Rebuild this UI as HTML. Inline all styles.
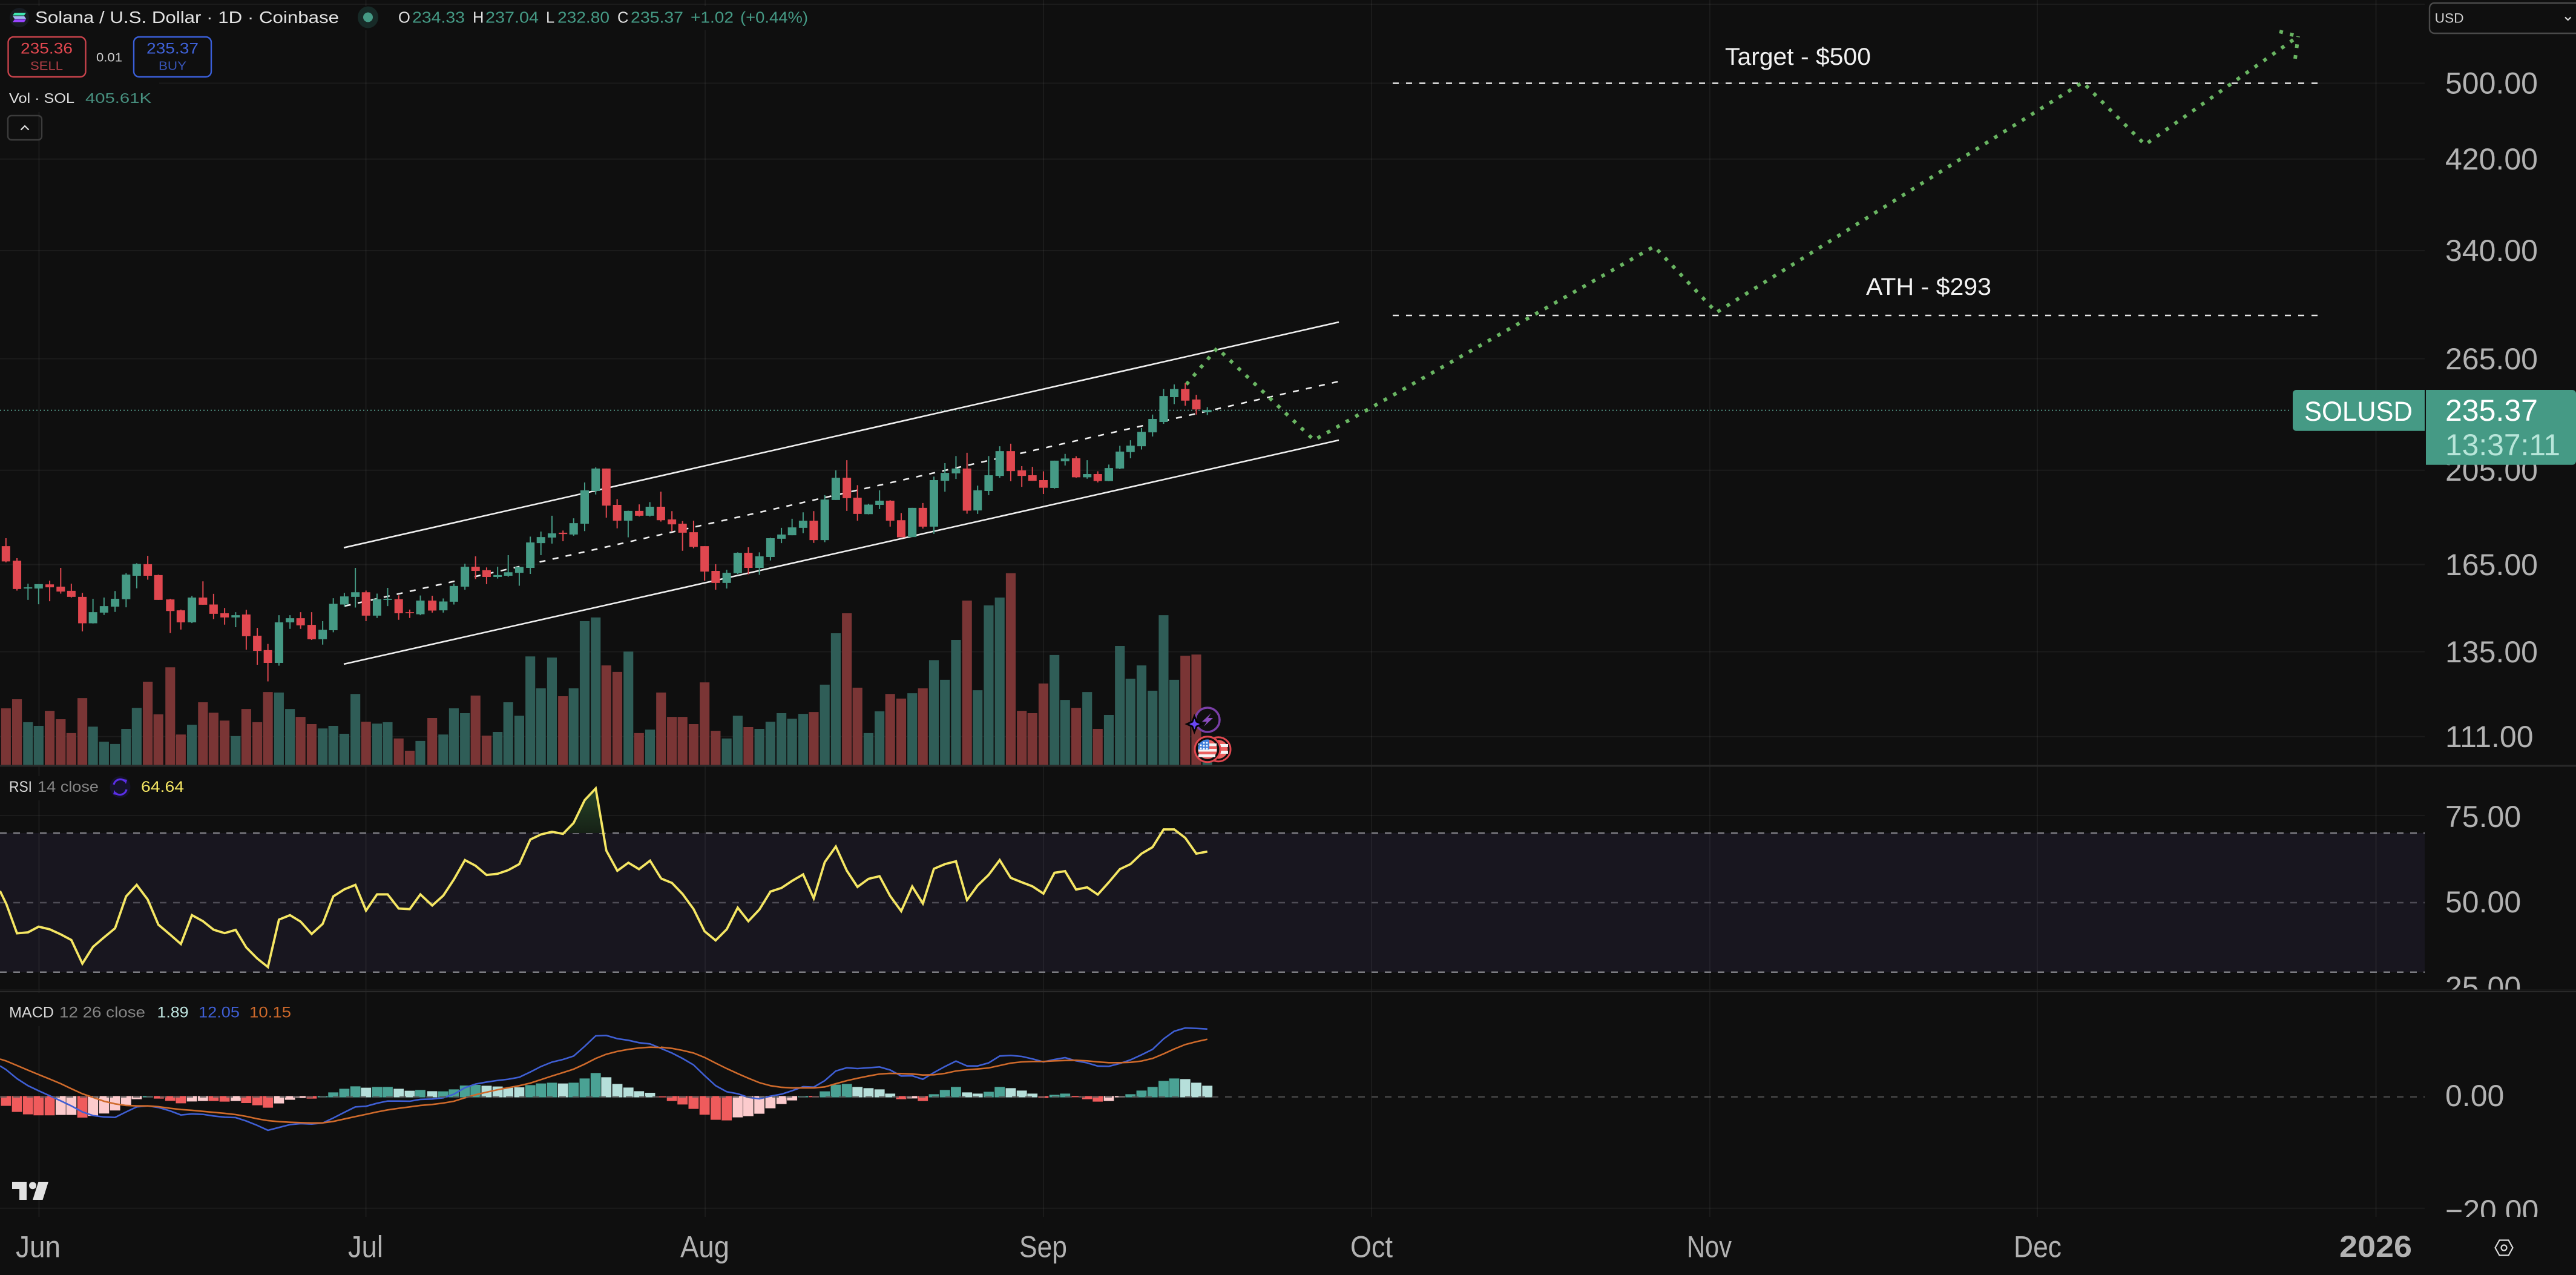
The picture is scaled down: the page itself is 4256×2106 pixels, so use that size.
<!DOCTYPE html>
<html lang="en"><head><meta charset="utf-8"><title>SOLUSD</title>
<style>
html,body{margin:0;padding:0;background:#0f0f0f;width:4256px;height:2106px;overflow:hidden}
svg{display:block}
text{font-family:"Liberation Sans",sans-serif}
.z path,.z polyline{vector-effect:non-scaling-stroke}
.ax{font-size:50px;fill:#b2b2b2}
.t{font-size:50px;fill:#b2b2b2}
</style></head><body>
<svg width="4256" height="2106" viewBox="0 0 4256 2106" xmlns="http://www.w3.org/2000/svg">
<rect width="4256" height="2106" fill="#0f0f0f"/>

<!-- RSI band -->
<rect x="0" y="1376" width="4006" height="230" fill="#18161f"/>

<!-- grid -->
<g stroke="#fff" stroke-opacity=".05" stroke-width="2" fill="none">
<path d="M64.5 0V2010M604.5 0V2010M1165 0V2010M1724 0V2010M2266 0V2010M2825 0V2010M3366 0V2010M3925.5 0V2010"/>
<path d="M0 7H4006M0 137.5H4006M0 262.7H4006M0 414H4006M0 592.5H4006M0 776.8H4006M0 932.5H4006M0 1076.5H4006M0 1216.6H4006M0 1347H4006M0 1995.7H4006"/>
</g>
<!-- legend cutouts -->
<g fill="#0f0f0f">
<rect x="0" y="10" width="1350" height="40"/><rect x="0" y="50" width="263" height="135"/>
<rect x="0" y="1282" width="315" height="40"/><rect x="0" y="1640" width="490" height="55"/>
</g>

<!-- RSI dashed levels -->
<g fill="none" stroke-dasharray="11 11" stroke-width="2.5">
<path d="M0 1376H4006" stroke="#7c7c82"/>
<path d="M0 1491H4006" stroke="#4e4c56"/>
<path d="M0 1605.7H4006" stroke="#7c7c82"/>
</g>

<!-- last price dotted -->
<path d="M0 677.7H3784" fill="none" stroke="#4f8f80" stroke-width="2" stroke-dasharray="2 4"/>

<!-- channel lines -->
<g fill="none" stroke="#efefef" stroke-width="2.6">
<path d="M568 904.7L2212 532"/>
<path d="M568 1097L2212 727"/>
<path d="M569.6 1001L2212 630" stroke-dasharray="10 12"/>
</g>

<!-- target lines -->
<g fill="none" stroke="#e8e8e8" stroke-width="2.4" stroke-dasharray="10 12">
<path d="M2301 137.5H3832"/><path d="M2301 521H3832"/>
</g>
<text x="2850" y="107" font-size="40" fill="#f2f2f2" textLength="241" lengthAdjust="spacingAndGlyphs">Target - $500</text>
<text x="3083" y="487" font-size="40" fill="#f2f2f2" textLength="207" lengthAdjust="spacingAndGlyphs">ATH - $293</text>

<!-- projection path -->
<g fill="none" stroke="#69b562" stroke-width="6" stroke-dasharray="6 12">
<path d="M1960 635L2011 575L2171 727L2733 407L2836 516L3441 136L3544 239L3797 60"/>
<path d="M3766 52L3797 60"/><path d="M3792 97L3797 60"/>
</g>

<!-- Volume + candles, first half: coords x/1.4255, y/2.613 -->
<g class="z" transform="translate(0,700) scale(.7015,.3827)">
<path fill="#7a3535" d="M2.5 1228h23V1472h-23zM28.5 1189h23V1472h-23zM105.5 1239h23V1472h-23zM131.5 1275h23V1472h-23zM156.5 1335h23V1472h-23zM182.5 1184h23V1472h-23zM336.5 1113h23V1472h-23zM361.5 1254h23V1472h-23zM389.5 1051h23V1472h-23zM414.5 1341h23V1472h-23zM466.5 1202h23V1472h-23zM491.5 1247h23V1472h-23zM517.5 1281h23V1472h-23zM568.5 1231h23V1472h-23zM594.5 1288h23V1472h-23zM619.5 1158h23V1472h-23zM696.5 1265h23V1472h-23zM722.5 1296h23V1472h-23zM850.5 1286h23V1472h-23zM927.5 1358h23V1472h-23zM953.5 1411h23V1472h-23zM1006.5 1270h23V1472h-23zM1108.5 1173h23V1472h-23zM1134.5 1346h23V1472h-23zM1314.5 1176h23V1472h-23zM1416.5 1043h23V1472h-23zM1442.5 1071h23V1472h-23zM1493.5 1335h23V1472h-23zM1545.5 1160h23V1472h-23z"/>
<path fill="#2f5d57" d="M54.5 1288h23V1472h-23zM79.5 1304h23V1472h-23zM207.5 1307h23V1472h-23zM233.5 1372h23V1472h-23zM259.5 1382h23V1472h-23zM285.5 1317h23V1472h-23zM310.5 1226h23V1472h-23zM440.5 1299h23V1472h-23zM543.5 1348h23V1472h-23zM645.5 1160h23V1472h-23zM671.5 1231h23V1472h-23zM748.5 1315h23V1472h-23zM773.5 1304h23V1472h-23zM799.5 1338h23V1472h-23zM825.5 1166h23V1472h-23zM876.5 1294h23V1472h-23zM901.5 1288h23V1472h-23zM978.5 1369h23V1472h-23zM1032.5 1341h23V1472h-23zM1057.5 1228h23V1472h-23zM1083.5 1249h23V1472h-23zM1160.5 1330h23V1472h-23zM1185.5 1202h23V1472h-23zM1211.5 1260h23V1472h-23zM1237.5 1004h23V1472h-23zM1262.5 1142h23V1472h-23zM1288.5 1009h23V1472h-23zM1339.5 1142h23V1472h-23zM1365.5 852h23V1472h-23zM1391.5 836h23V1472h-23zM1468.5 983h23V1472h-23zM1519.5 1320h23V1472h-23z"/>
<path fill="none" stroke="#459a85" stroke-width="2" d="M66 690V760M91 692V779M219 755V862M245 750V825M271 722V812M297 645V792M322 602V710M452 743V860M555 813V878M657 826V1044M683 826V885M760 852V953M785 753V900M811 730V790M837 622V793M888 733V838M913 708V787M990 741V826M1044 754V815M1069 690V780M1095 604V716M1172 617V668M1197 567V660M1223 618V699M1249 487V648M1274 465V567M1300 397V517M1351 408V483M1377 253V463M1403 188V305"/>
<path fill="#459a85" d="M56 706h20V711h-20zM81 692h20V711h-20zM209 813h20V861h-20zM235 787h20V815h-20zM261 755h20V789h-20zM287 651h20V757h-20zM312 605h20V656h-20zM442 750h20V857h-20zM545 826h20V836h-20zM647 857h20V1032h-20zM673 839h20V857h-20zM750 889h20V930h-20zM775 777h20V891h-20zM801 745h20V780h-20zM827 727h20V747h-20zM878 757h20V828h-20zM903 755h20V760h-20zM980 763h20V822h-20zM1034 767h20V805h-20zM1059 700h20V768h-20zM1085 617h20V703h-20zM1162 653h20V661h-20zM1187 641h20V656h-20zM1213 618h20V643h-20zM1239 512h20V622h-20zM1264 489h20V515h-20zM1290 473h20V491h-20zM1341 429h20V478h-20zM1367 287h20V431h-20zM1393 193h20V290h-20z"/>
<path fill="none" stroke="#e0474f" stroke-width="2" d="M14 494V598M40 580V720M117 677V766M143 622V733M168 690V750M194 730V896M348 570V673M373 651V760M401 755V903M426 802V888M478 680V781M503 734V843M529 795V867M580 803V975M606 881V1040M631 950V1112M708 813V885M734 813V933M862 720V852M939 740V846M965 802V838M1018 742V815M1120 572V670M1146 620V692M1326 461V507M1428 193V405"/>
<path fill="#e0474f" d="M4 528h20V594H4zM30 591h20V713H30zM107 693h20V706h-20zM133 703h20V724h-20zM158 721h20V747h-20zM184 747h20V861h-20zM338 606h20V656h-20zM363 653h20V760h-20zM391 758h20V808h-20zM416 805h20V857h-20zM468 750h20V781h-20zM493 780h20V820h-20zM519 818h20V836h-20zM570 823h20V917h-20zM596 915h20V980h-20zM621 977h20V1032h-20zM698 839h20V870h-20zM724 868h20V930h-20zM852 727h20V828h-20zM929 757h20V818h-20zM955 813h20V817h-20zM1008 763h20V806h-20zM1110 617h20V635h-20zM1136 632h20V661h-20zM1316 470h20V476h-20zM1418 193h20V353h-20z"/>
</g>

<!-- Volume + candles, second half -->
<g class="z" transform="translate(1000,700) scale(.7015,.3827)">
<path fill="#7a3535" d="M145.5 1265h23V1472h-23zM170.5 1265h23V1472h-23zM196.5 1296h23V1472h-23zM222.5 1116h23V1472h-23zM248.5 1325h23V1472h-23zM325.5 1309h23V1472h-23zM479.5 1244h23V1472h-23zM557.5 818h23V1472h-23zM582.5 1139h23V1472h-23zM659.5 1166h23V1472h-23zM685.5 1186h23V1472h-23zM736.5 1142h23V1472h-23zM840.5 763h23V1472h-23zM943.5 645h23V1472h-23zM969.5 1239h23V1472h-23zM994.5 1249h23V1472h-23zM1020.5 1121h23V1472h-23zM1097.5 1226h23V1472h-23zM1148.5 1317h23V1472h-23zM1354.5 1001h23V1472h-23zM1380.5 996h23V1472h-23z"/>
<path fill="#2f5d57" d="M274.5 1358h23V1472h-23zM300.5 1260h23V1472h-23zM351.5 1317h23V1472h-23zM377.5 1286h23V1472h-23zM403.5 1249h23V1472h-23zM428.5 1273h23V1472h-23zM454.5 1252h23V1472h-23zM505.5 1126h23V1472h-23zM531.5 904h23V1472h-23zM608.5 1335h23V1472h-23zM634.5 1241h23V1472h-23zM711.5 1163h23V1472h-23zM762.5 1020h23V1472h-23zM788.5 1105h23V1472h-23zM814.5 933h23V1472h-23zM865.5 1150h23V1472h-23zM891.5 784h23V1472h-23zM917.5 750h23V1472h-23zM1046.5 998h23V1472h-23zM1071.5 1192h23V1472h-23zM1123.5 1158h23V1472h-23zM1174.5 1257h23V1472h-23zM1200.5 959h23V1472h-23zM1225.5 1100h23V1472h-23zM1251.5 1043h23V1472h-23zM1277.5 1152h23V1472h-23zM1303.5 826h23V1472h-23zM1328.5 1105h23V1472h-23zM1406.5 1440h23V1472h-23z"/>
<path fill="none" stroke="#459a85" stroke-width="2" d="M105 338V400M286 630V711M312 555V648M363 555V652M389 492V590M415 449V515M440 410V481M466 382V472M517 308V511M543 201V329M620 345V391M646 287V368M723 363V489M774 228V475M800 170V293M826 139V238M877 267V389M903 139V308M929 97V233M1058 159V280M1083 130V180M1135 157V237M1186 176V248M1212 95V196M1237 71V149M1263 18V111M1289 -40V55M1315 -150V0M1340 -170V-85M1418 -72V-38M54 375V490"/>
<path fill="#459a85" d="M44 376h20V418H44zM95 358h20V397H95zM276 643h20V687h-20zM302 557h20V645h-20zM353 572h20V622h-20zM379 494h20V575h-20zM405 478h20V496h-20zM430 447h20V481h-20zM456 418h20V449h-20zM507 327h20V502h-20zM533 233h20V329h-20zM610 349h20V390h-20zM636 332h20V350h-20zM713 363h20V489h-20zM764 243h20V444h-20zM790 212h20V246h-20zM816 193h20V214h-20zM867 287h20V374h-20zM893 222h20V290h-20zM919 118h20V225h-20zM1048 159h20V277h-20zM1073 150h20V162h-20zM1125 217h20V231h-20zM1176 191h20V247h-20zM1202 120h20V193h-20zM1227 94h20V122h-20zM1253 35h20V97h-20zM1279 -21h20V37h-20zM1305 -120h20V-8h-20zM1330 -150h20V-115h-20zM1408 -60h20V-50h-20z"/>
<path fill="none" stroke="#e0474f" stroke-width="2" d="M28 325V451M80 348V400M131 293V422M157 377V463M182 420V548M208 418V537M234 528V677M260 606V716M337 533V650M491 377V514M569 157V376M594 265V418M671 330V444M697 385V490M748 342V452M852 125V388M955 86V248M981 183V272M1006 186V246M1032 205V303M1109 140V233M1160 205V253M1366 -175V-78M1392 -125V-40"/>
<path fill="#e0474f" d="M18 350h20V418H18zM70 376h20V397H70zM121 358h20V416h-20zM147 413h20V434h-20zM172 431h20V470h-20zM198 468h20V531h-20zM224 528h20V638h-20zM250 635h20V687h-20zM327 557h20V622h-20zM481 418h20V502h-20zM559 233h20V321h-20zM584 319h20V389h-20zM661 332h20V418h-20zM687 416h20V490h-20zM738 363h20V444h-20zM842 193h20V375h-20zM945 118h20V204h-20zM971 201h20V225h-20zM996 222h20V246h-20zM1022 243h20V276h-20zM1099 149h20V231h-20zM1150 217h20V247h-20zM1356 -150h20V-100h-20zM1382 -105h20V-62h-20z"/>
</g>

<!-- RSI overbought fill -->
<defs><linearGradient id="ob" x1="0" y1="0" x2="0" y2="1"><stop offset="0" stop-color="#264428"/><stop offset="1" stop-color="#162116"/></linearGradient></defs>
<polygon points="930,1376 947,1359 965,1322 982,1302 1000,1374 1001,1376" fill="url(#ob)"/>
<!-- RSI line -->
<g class="z" transform="translate(0,1270) scale(.7015,.3333)">
<polyline fill="none" stroke="#f5e663" stroke-width="3.8" stroke-linejoin="miter" points="0,605 15,670 40,815 66,810 91,782 117,795 143,820 168,848 194,965 219,882 245,835 271,790 297,632 322,575 348,648 373,772 401,822 426,868 452,725 478,755 503,797 529,814 555,798 580,885 606,940 631,982 657,747 683,725 708,757 734,818 760,768 785,632 811,597 837,575 862,702 888,622 913,622 939,692 965,695 990,622 1018,677 1044,628 1069,548 1095,452 1120,480 1146,526 1172,520 1197,502 1223,472 1249,350 1274,325 1300,312 1326,322 1351,268 1377,155 1403,97 1428,405 1454,505 1480,465 1505,497 1531,455 1557,543"/>
</g>
<g class="z" transform="translate(1000,1270) scale(.7015,.3333)">
<polyline fill="none" stroke="#f5e663" stroke-width="3.8" points="131,543 157,565 182,620 208,695 234,805 260,850 286,795 312,688 337,755 363,697 389,608 415,590 440,555 466,523 491,642 517,462 543,385 569,505 594,585 620,545 646,532 671,630 697,705 723,583 748,667 774,495 800,472 826,458 852,650 877,578 903,525 929,452 955,540 981,562 1006,582 1032,618 1058,515 1083,507 1109,598 1135,587 1160,623 1186,562 1212,497 1237,472 1263,420 1289,388 1315,300 1340,300 1366,342 1392,420 1418,410"/>
</g>

<!-- MACD histogram + lines, first half -->
<g class="z" transform="translate(0,1620) scale(.7015,.3333)">
<path fill="#ef5b5c" d="M2 571h24V620H2zM28 571h24V650H28zM54 571h24V662H54zM79 571h24V667H79zM105 571h24V667H105zM182 571h24V678H182zM362 571h24V584H362zM389 571h24V595H389zM414 571h24V607H414zM491 571h24V596H491zM517 571h24V599H517zM568 571h24V606H568zM594 571h24V617H594zM619 571h24V629H619zM722 571h24V584H722zM1545 573h24V578H1545z"/>
<path fill="#fccbcd" d="M131 571h24V665H131zM156 571h24V665H156zM207 571h24V670H207zM233 571h24V658H233zM259 571h24V643H259zM285 571h24V615H285zM310 571h24V587H310zM440 571h24V598H440zM466 571h24V596H466zM543 571h24V596H543zM645 571h24V608H645zM671 571h24V590H671zM696 571h24V581H696z"/>
<path fill="#4aa294" d="M336 571h24V578H336zM748 571h24V578H748zM773 553h24V578H773zM799 535h24V578H799zM825 523h24V578H825zM876 526h24V578H876zM901 526h24V578H901zM978 541h24V578H978zM1032 548h24V578H1032zM1057 538h24V578H1057zM1083 519h24V578H1083zM1108 516h24V578H1108zM1237 517h24V578H1237zM1262 509h24V578H1262zM1288 505h24V578H1288zM1339 505h24V578H1339zM1365 484h24V578H1365zM1391 457h24V578H1391z"/>
<path fill="#b6dfda" d="M850 530h24V578H850zM927 535h24V578H927zM953 545h24V578H953zM1006 547h24V578H1006zM1134 520h24V578H1134zM1160 524h24V578H1160zM1185 530h24V578H1185zM1211 528h24V578H1211zM1314 509h24V578H1314zM1416 478h24V578H1416zM1442 511h24V578H1442zM1468 529h24V578H1468zM1493 547h24V578H1493zM1519 555h24V578H1519z"/>
<polyline fill="none" stroke="#3f5fd4" stroke-width="2.6" points="0,422 14,440 40,485 66,520 91,545 117,570 143,595 168,620 194,650 219,668 245,675 271,677 297,650 322,625 348,620 373,628 401,645 426,665 452,660 478,662 503,670 529,676 555,678 580,695 606,717 631,741 657,727 683,713 708,708 734,710 760,705 785,680 811,652 837,625 862,622 888,607 913,596 939,596 965,597 990,588 1018,586 1044,580 1069,562 1095,530 1120,512 1146,502 1172,494 1197,488 1223,478 1249,452 1274,425 1300,403 1326,390 1351,373 1377,325 1403,273 1428,271 1454,287 1480,295 1505,307 1531,313 1557,335"/>
<polyline fill="none" stroke="#cf6a2b" stroke-width="2.6" points="0,388 14,397 40,420 66,443 91,465 117,487 143,510 168,535 194,560 219,578 245,597 271,610 297,618 322,620 348,620 373,624 401,632 426,638 452,642 478,647 503,652 529,657 555,663 580,672 606,684 631,693 657,698 683,701 708,703 734,705 760,704 785,697 811,685 837,673 862,662 888,650 913,640 939,632 965,625 990,618 1018,613 1044,606 1069,597 1095,580 1120,565 1146,552 1172,540 1197,530 1223,520 1249,507 1274,490 1300,472 1326,455 1351,438 1377,413 1403,385 1428,364 1454,350 1480,340 1505,333 1531,329 1557,331"/>
</g>
<g class="z" transform="translate(1000,1620) scale(.7015,.3333)">
<path fill="#ef5b5c" d="M145 571h24V596H145zM170 571h24V613H170zM196 571h24V635H196zM222 571h24V664H222zM248 571h24V689H248zM274 571h24V692H274zM479 571h24V577H479zM685 571h24V587H685zM736 571h24V596H736zM1020 571h24V581H1020zM1097 571h24V577H1097zM1123 571h24V587H1123zM1148 571h24V599H1148z"/>
<path fill="#fccbcd" d="M300 571h24V677H300zM325 571h24V671H325zM351 571h24V659H351zM377 571h24V632H377zM403 571h24V611H403zM428 571h24V593H428zM711 571h24V583H711zM1174 571h24V596H1174zM1200 571h24V578H1200z"/>
<path fill="#4aa294" d="M454 571h24V578H454zM505 548h24V578H505zM531 515h24V578H531zM557 511h24V578H557zM762 562h24V578H762zM788 541h24V578H788zM814 526h24V578H814zM891 550h24V578H891zM917 526h24V578H917zM1046 565h24V578H1046zM1071 559h24V578H1071zM1225 562h24V578H1225zM1251 544h24V578H1251zM1277 526h24V578H1277zM1303 496h24V578H1303zM1328 484h24V578H1328z"/>
<path fill="#b6dfda" d="M582 526h24V578H582zM608 532h24V578H608zM634 538h24V578H634zM659 559h24V578H659zM840 553h24V578H840zM865 559h24V578H865zM943 532h24V578H943zM969 544h24V578H969zM994 559h24V578H994zM1354 487h24V578H1354zM1380 505h24V578H1380zM1406 520h24V578H1406z"/>
<polyline fill="none" stroke="#3f5fd4" stroke-width="2.6" points="131,335 157,358 182,385 208,417 234,470 260,520 286,550 312,560 337,578 363,585 389,572 415,562 440,545 466,525 491,527 517,495 543,447 569,431 594,435 620,431 646,427 671,442 697,472 723,471 748,488 774,455 800,425 826,398 852,422 877,422 903,407 929,373 955,370 981,375 1006,387 1032,402 1058,390 1083,381 1109,397 1135,407 1160,423 1186,424 1212,410 1237,392 1263,367 1289,340 1315,288 1340,250 1366,234 1392,236 1418,239"/>
<polyline fill="none" stroke="#cf6a2b" stroke-width="2.6" points="131,329 157,335 182,345 208,358 234,380 260,408 286,435 312,460 337,483 363,505 389,520 415,528 440,531 466,531 491,531 517,526 543,510 569,495 594,483 620,472 646,462 671,459 697,460 723,462 748,467 774,466 800,459 826,447 852,441 877,437 903,432 929,420 955,408 981,402 1006,400 1032,400 1058,397 1083,395 1109,394 1135,397 1160,402 1186,406 1212,406 1237,404 1263,398 1289,385 1315,362 1340,338 1366,316 1392,302 1418,290"/>
</g>
<!-- MACD zero line, over the bars -->
<path d="M0 1811.7H4006" fill="none" stroke="#555" stroke-opacity=".8" stroke-width="2.5" stroke-dasharray="11 11"/>

<!-- Event icons -->
<circle cx="1995" cy="1189" r="20" fill="#0f0f0f" stroke="#7b3fa8" stroke-width="3.5"/>
<path d="M2001 1178L1986 1192H1994L1989 1200L2004 1186H1996Z" fill="#8a4cc0"/>
<path d="M1973.3 1183L1977 1192L1986 1196L1977 1200L1973.3 1209L1970 1200L1961 1196L1970 1192Z" fill="#6a46f5" stroke="#050505" stroke-width="3"/>
<circle cx="2013" cy="1237.7" r="20" fill="#0f0f0f" stroke="#e0474f" stroke-width="3"/>
<circle cx="2013" cy="1237.7" r="15.5" fill="#e8605f"/>
<rect x="2004" y="1229" width="25" height="5" fill="#f4f4f4"/><rect x="2004" y="1240" width="25" height="5" fill="#f4f4f4"/>
<circle cx="1995" cy="1237.7" r="21" fill="#0f0f0f" stroke="#e0474f" stroke-width="3"/>
<circle cx="1995" cy="1237.7" r="16" fill="#e8605f"/>
<rect x="1980" y="1228" width="30" height="4.5" fill="#f4f4f4"/><rect x="1980" y="1237" width="30" height="4.5" fill="#f4f4f4"/><rect x="1980" y="1246" width="28" height="4.5" fill="#f4f4f4"/>
<path d="M1979.2 1236V1234a16 16 0 0 1 18.8-12.3V1238H1979.2Z" fill="#3f7fdb"/>
<g fill="#fff"><circle cx="1984" cy="1231" r="1.5"/><circle cx="1989" cy="1227" r="1.5"/><circle cx="1994" cy="1227" r="1.5"/><circle cx="1989" cy="1232" r="1.5"/><circle cx="1994" cy="1232" r="1.5"/><circle cx="1984" cy="1236" r="1.5"/><circle cx="1989" cy="1236.5" r="1.5"/><circle cx="1994" cy="1236.5" r="1.5"/></g>

<!-- pane separators -->
<rect x="0" y="1263.5" width="4256" height="3" fill="#292929"/>

<!-- Price axis -->
<g class="ax">
<text x="4040" y="154.5">500.00</text>
<text x="4040" y="280">420.00</text>
<text x="4040" y="431">340.00</text>
<text x="4040" y="610">265.00</text>
<text x="4040" y="794">205.00</text>
<text x="4040" y="950">165.00</text>
<text x="4040" y="1094">135.00</text>
<text x="4040" y="1234">111.00</text>
<text x="4040" y="1366">75.00</text>
<text x="4040" y="1507">50.00</text>
<text x="4040" y="1648">25.00</text>
<text x="4040" y="1827">0.00</text>
<text x="4040" y="2017">−20.00</text>
</g>
<rect x="4006" y="1635" width="250" height="30" fill="#0f0f0f"/>
<rect x="4006" y="2010" width="250" height="20" fill="#0f0f0f"/>
<rect x="0" y="1634.5" width="4256" height="1.5" fill="#1f1f1f"/>
<rect x="0" y="1637" width="4256" height="2" fill="#292929"/>

<!-- Last price labels -->
<path d="M3794 644H4006V711.7H3794a6 6 0 0 1-6-6V650a6 6 0 0 1 6-6Z" fill="#459a85"/>
<path d="M4008 644H4250a6 6 0 0 1 6 6V761.7a6 6 0 0 1-6 6H4008Z" fill="#459a85"/>
<text x="3807" y="695" font-size="45" fill="#fff" textLength="179" lengthAdjust="spacingAndGlyphs">SOLUSD</text>
<text x="4040" y="695" font-size="50" fill="#fff">235.37</text>
<text x="4040" y="752" font-size="50" fill="#b8e6da" textLength="190" lengthAdjust="spacingAndGlyphs">13:37:11</text>

<!-- Time axis -->
<g class="t">
<text x="26" y="2076.5" textLength="74" lengthAdjust="spacingAndGlyphs">Jun</text>
<text x="575" y="2076.5" textLength="58" lengthAdjust="spacingAndGlyphs">Jul</text>
<text x="1124" y="2076.5" textLength="81" lengthAdjust="spacingAndGlyphs">Aug</text>
<text x="1684" y="2076.5" textLength="79" lengthAdjust="spacingAndGlyphs">Sep</text>
<text x="2231" y="2076.5" textLength="70" lengthAdjust="spacingAndGlyphs">Oct</text>
<text x="2787" y="2076.5" textLength="74" lengthAdjust="spacingAndGlyphs">Nov</text>
<text x="3327" y="2076.5" textLength="79" lengthAdjust="spacingAndGlyphs">Dec</text>
<text x="3865" y="2076" font-weight="700" textLength="120" lengthAdjust="spacingAndGlyphs">2026</text>
</g>
<path d="M4122.5 2061L4129.5 2048.5H4144.5L4151.5 2061L4144.5 2073.5H4129.5Z" fill="none" stroke="#dcdcdc" stroke-width="2.2"/>
<circle cx="4137" cy="2061" r="4.5" fill="none" stroke="#dcdcdc" stroke-width="2.2"/>

<!-- TradingView logo -->
<path d="M20 1952H44V1982H32V1964H20Z" fill="#e2e2e2"/>
<circle cx="54" cy="1958.3" r="6" fill="#e2e2e2"/>
<path d="M63.5 1952H80L70.5 1982H54Z" fill="#e2e2e2"/>

<!-- Header legend -->
<circle cx="32" cy="29" r="16" fill="#181c22"/>
<path d="M24 21H43L40 25.5H21Z" fill="#3ee6b0"/>
<path d="M21 26.5H40L43 31H24Z" fill="#a3b3f2"/>
<path d="M24 32H43L40 36.5H21Z" fill="#9945ff"/>
<text x="58" y="38" font-size="28" fill="#e2e2e2" textLength="502" lengthAdjust="spacingAndGlyphs">Solana / U.S. Dollar · 1D · Coinbase</text>
<ellipse cx="608" cy="28.5" rx="17" ry="18" fill="#172a27"/>
<circle cx="608" cy="28.5" r="8" fill="#459a85"/>
<g font-size="25.5">
<text x="658" y="37.5" fill="#e2e2e2">O</text>
<text x="681" y="37.5" fill="#459a85" textLength="87" lengthAdjust="spacingAndGlyphs">234.33</text>
<text x="781" y="37.5" fill="#e2e2e2">H</text>
<text x="802" y="37.5" fill="#459a85" textLength="88" lengthAdjust="spacingAndGlyphs">237.04</text>
<text x="902" y="37.5" fill="#e2e2e2">L</text>
<text x="921" y="37.5" fill="#459a85" textLength="86" lengthAdjust="spacingAndGlyphs">232.80</text>
<text x="1020" y="37.5" fill="#e2e2e2">C</text>
<text x="1042" y="37.5" fill="#459a85" textLength="87" lengthAdjust="spacingAndGlyphs">235.37</text>
<text x="1141" y="37.5" fill="#459a85" textLength="71" lengthAdjust="spacingAndGlyphs">+1.02</text>
<text x="1223" y="37.5" fill="#459a85" textLength="112" lengthAdjust="spacingAndGlyphs">(+0.44%)</text>
</g>

<!-- Sell / Buy -->
<rect x="13.5" y="61" width="128" height="66" rx="9" fill="none" stroke="#c9434c" stroke-width="2.4"/>
<text x="34" y="88.5" font-size="25" fill="#e0474f" textLength="86" lengthAdjust="spacingAndGlyphs">235.36</text>
<text x="50" y="115.6" font-size="20" fill="#b23f46" textLength="54" lengthAdjust="spacingAndGlyphs">SELL</text>
<text x="159" y="101.7" font-size="20" fill="#cfcfcf" textLength="43" lengthAdjust="spacingAndGlyphs">0.01</text>
<rect x="221" y="61" width="128" height="66" rx="9" fill="none" stroke="#3a5fd9" stroke-width="2.4"/>
<text x="242" y="88.5" font-size="25" fill="#3f62d9" textLength="86" lengthAdjust="spacingAndGlyphs">235.37</text>
<text x="262" y="115.6" font-size="20" fill="#3753b5" textLength="46" lengthAdjust="spacingAndGlyphs">BUY</text>

<!-- Vol legend -->
<text x="15" y="170" font-size="23" fill="#e0e0e0" textLength="108" lengthAdjust="spacingAndGlyphs">Vol · SOL</text>
<text x="141" y="170" font-size="23" fill="#47907f" textLength="109" lengthAdjust="spacingAndGlyphs">405.61K</text>
<rect x="13" y="191" width="56" height="40" rx="6" fill="none" stroke="#3c3c3c" stroke-width="2.4"/>
<path d="M34.5 214.5L41 208L47.5 214.5" fill="none" stroke="#e2e2e2" stroke-width="2.2"/>

<!-- RSI legend -->
<text x="15" y="1308" font-size="25" fill="#d8d8d8" textLength="38" lengthAdjust="spacingAndGlyphs">RSI</text>
<text x="62" y="1308" font-size="25" fill="#868686" textLength="101" lengthAdjust="spacingAndGlyphs">14 close</text>
<ellipse cx="198.5" cy="1300" rx="17" ry="18" fill="#15132a"/>
<path d="M188 1296a11 11 0 0 1 19-5M209 1304a11 11 0 0 1-19 5" fill="none" stroke="#5a2ee6" stroke-width="3.2"/>
<path d="M204 1287l6 1-2 7zM193 1313l-6-1 2-7z" fill="#5a2ee6"/>
<text x="233" y="1308" font-size="25" fill="#f5e663" textLength="71" lengthAdjust="spacingAndGlyphs">64.64</text>

<!-- MACD legend -->
<text x="15" y="1680.7" font-size="25" fill="#d8d8d8" textLength="74" lengthAdjust="spacingAndGlyphs">MACD</text>
<text x="98" y="1680.7" font-size="25" fill="#868686" textLength="142" lengthAdjust="spacingAndGlyphs">12 26 close</text>
<text x="259.5" y="1680.7" font-size="25" fill="#c0e6e1" textLength="52" lengthAdjust="spacingAndGlyphs">1.89</text>
<text x="328" y="1680.7" font-size="25" fill="#3f5fd4" textLength="68" lengthAdjust="spacingAndGlyphs">12.05</text>
<text x="412" y="1680.7" font-size="25" fill="#cf6a2b" textLength="69" lengthAdjust="spacingAndGlyphs">10.15</text>

<!-- Currency box -->
<path d="M4260 5H4022a8 8 0 0 0-8 8V47a8 8 0 0 0 8 8H4260" fill="#0f0f0f" stroke="#4a4a4a" stroke-width="2.4"/>
<text x="4022.6" y="37.3" font-size="22" fill="#cfcfcf" textLength="48" lengthAdjust="spacingAndGlyphs">USD</text>
<path d="M4238 28.5L4242.7 33L4247.4 28.5" fill="none" stroke="#e2e2e2" stroke-width="2.2"/>
</svg>
</body></html>
